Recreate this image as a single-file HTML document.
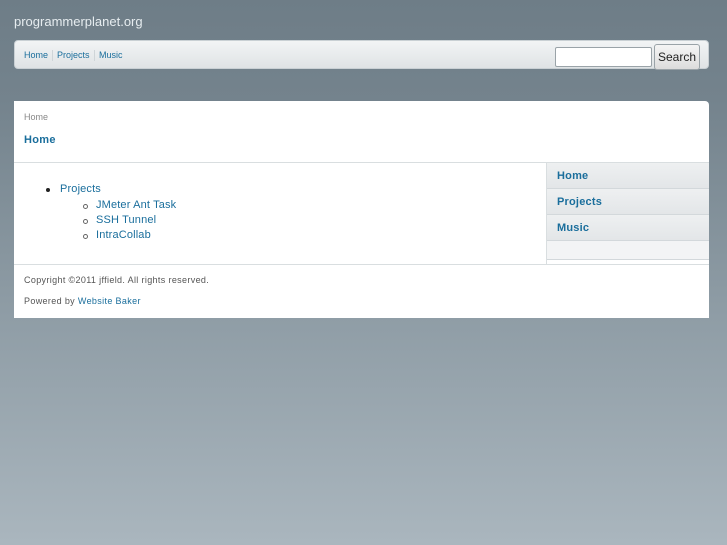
<!DOCTYPE html>
<html><head><style>
body{margin:0;width:727px;height:545px;background:linear-gradient(#6e7d87 0,#74838d 100px,#8d9ba4 300px,#aab6be 545px);font-family:"Liberation Sans",sans-serif;position:relative;overflow:hidden}
.t{position:absolute;left:14px;top:14px;font-size:13px;color:#e6ecef}
.nav{position:absolute;left:14px;top:40px;width:695px;height:29px;border-radius:4px;background:linear-gradient(#f2f4f5,#dfe3e5);border:1px solid #c9d0d4;box-sizing:border-box}
.nav a{position:absolute;top:9px;font-size:9px;color:#1a6e9c}
.sep{position:absolute;top:9px;width:1px;height:11px;background:#cfd5d8}
.in{position:absolute;left:555px;top:47px;width:97px;height:20px;box-sizing:border-box;border:1px solid #9aa3a8;border-radius:2px;background:#fff}
.btn{position:absolute;left:654px;top:44px;width:46px;height:26px;box-sizing:border-box;border:1px solid #9aa3a8;border-radius:3px;background:linear-gradient(#f5f5f5,#dcdcdc);font-size:12px;color:#222;text-align:center;line-height:24px}
.p{position:absolute;left:14px;top:101px;width:695px;height:217px;background:#fff;border-radius:0 4px 0 0}
.b{position:absolute;left:10px;top:11px;font-size:9px;color:#888}
.h{position:absolute;left:10px;top:32px;font-size:11px;font-weight:bold;color:#1a6e9c;letter-spacing:0.3px}
.l1{position:absolute;left:0;top:61px;width:695px;height:1px;background:#d9dee0}
.l2{position:absolute;left:0;top:163px;width:695px;height:1px;background:#d9dee0}
.side{position:absolute;left:532px;top:62px;width:162px;height:101px;border-left:1px solid #d9dee0}
.si{height:25px;border-bottom:1px solid #d3d8db;background:linear-gradient(#eef0f1,#e3e6e8);font-size:11px;font-weight:bold;color:#1a6e9c;padding-left:10px;line-height:26px;letter-spacing:0.2px}
.c{position:absolute;font-size:11px;color:#1a6e9c;letter-spacing:0.15px}
.dot{position:absolute;width:4px;height:4px;border-radius:50%;background:#222}
.ring{position:absolute;width:3px;height:3px;border-radius:50%;border:1px solid #666}
.f{position:absolute;left:10px;font-size:9px;color:#555;letter-spacing:0.35px}
</style></head><body>
<div class="t">programmerplanet.org</div>
<div class="nav">
<a style="left:9px">Home</a><div class="sep" style="left:37px"></div>
<a style="left:42px">Projects</a><div class="sep" style="left:79px"></div>
<a style="left:84px">Music</a>
</div>
<div class="in"></div><div class="btn">Search</div>
<div class="p">
<div class="b">Home</div>
<div class="h" style="top:33px">Home</div>
<div class="l1"></div>
<div class="dot" style="left:32px;top:87px"></div>
<div class="c" style="left:46px;top:82px">Projects</div>
<div class="ring" style="left:69px;top:103px"></div><div class="c" style="left:82px;top:98px">JMeter Ant Task</div>
<div class="ring" style="left:69px;top:118px"></div><div class="c" style="left:82px;top:113px">SSH Tunnel</div>
<div class="ring" style="left:69px;top:133px"></div><div class="c" style="left:82px;top:128px">IntraCollab</div>
<div class="side"><div class="si">Home</div><div class="si">Projects</div><div class="si">Music</div><div class="si" style="height:18px;background:#f3f4f5"></div></div>
<div class="l2"></div>
<div class="f" style="top:174px">Copyright ©2011 jffield. All rights reserved.</div>
<div class="f" style="top:195px">Powered by <span style="color:#1a6e9c">Website Baker</span></div>
</div>
</body></html>
